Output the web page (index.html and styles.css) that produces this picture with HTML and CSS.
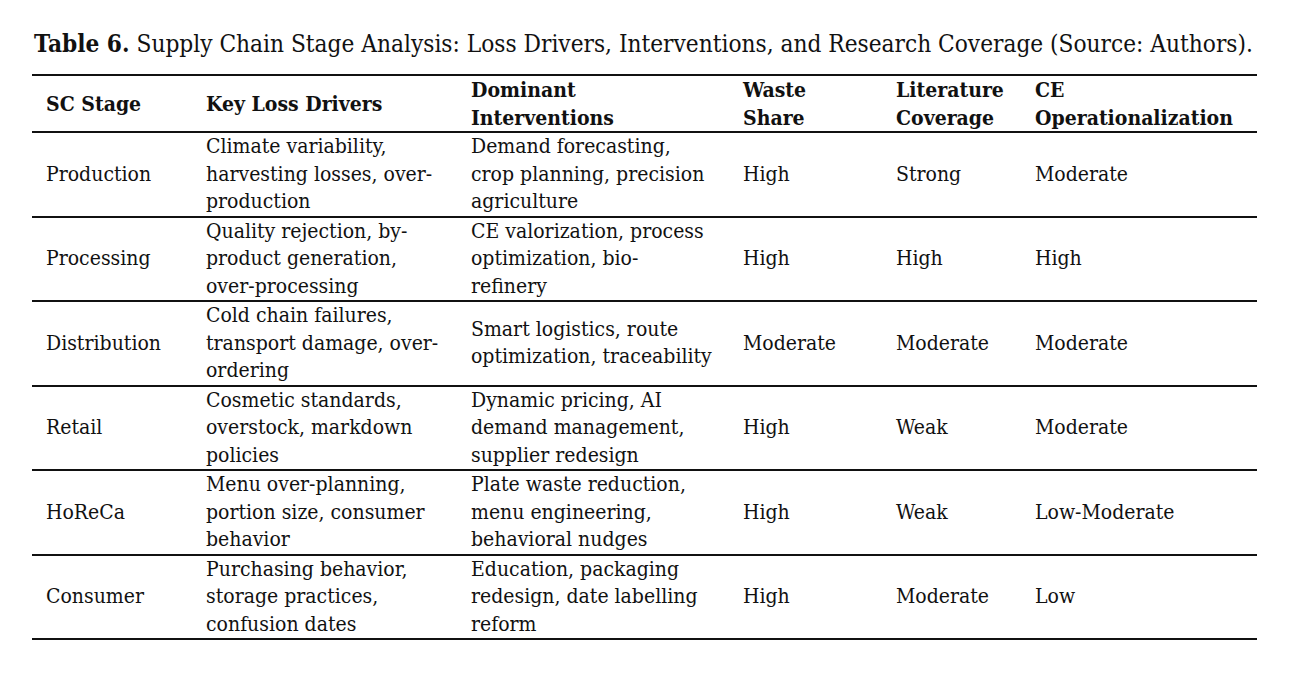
FILE: index.html
```html
<!DOCTYPE html>
<html>
<head>
<meta charset="utf-8">
<link rel="stylesheet" href="styles.css">
</head>
<body>
<div class="page">
  <p class="caption"><b>Table 6.</b> Supply Chain Stage Analysis: Loss Drivers, Interventions, and Research Coverage (Source: Authors).</p>
  <table class="tbl">
    <colgroup>
      <col class="c1"><col class="c2"><col class="c3"><col class="c4"><col class="c5"><col class="c6">
    </colgroup>
    <thead>
      <tr>
        <th>SC Stage</th>
        <th>Key Loss Drivers</th>
        <th>Dominant<br>Interventions</th>
        <th>Waste<br>Share</th>
        <th>Literature<br>Coverage</th>
        <th>CE<br>Operationalization</th>
      </tr>
    </thead>
    <tbody>
      <tr>
        <td>Production</td>
        <td>Climate variability,<br>harvesting losses, over-<br>production</td>
        <td>Demand forecasting,<br>crop planning, precision<br>agriculture</td>
        <td>High</td>
        <td>Strong</td>
        <td>Moderate</td>
      </tr>
      <tr>
        <td>Processing</td>
        <td>Quality rejection, by-<br>product generation,<br>over-processing</td>
        <td>CE valorization, process<br>optimization, bio-<br>refinery</td>
        <td>High</td>
        <td>High</td>
        <td>High</td>
      </tr>
      <tr>
        <td>Distribution</td>
        <td>Cold chain failures,<br>transport damage, over-<br>ordering</td>
        <td>Smart logistics, route<br>optimization, traceability</td>
        <td>Moderate</td>
        <td>Moderate</td>
        <td>Moderate</td>
      </tr>
      <tr>
        <td>Retail</td>
        <td>Cosmetic standards,<br>overstock, markdown<br>policies</td>
        <td>Dynamic pricing, AI<br>demand management,<br>supplier redesign</td>
        <td>High</td>
        <td>Weak</td>
        <td>Moderate</td>
      </tr>
      <tr>
        <td>HoReCa</td>
        <td>Menu over-planning,<br>portion size, consumer<br>behavior</td>
        <td>Plate waste reduction,<br>menu engineering,<br>behavioral nudges</td>
        <td>High</td>
        <td>Weak</td>
        <td>Low-Moderate</td>
      </tr>
      <tr>
        <td>Consumer</td>
        <td>Purchasing behavior,<br>storage practices,<br>confusion dates</td>
        <td>Education, packaging<br>redesign, date labelling<br>reform</td>
        <td>High</td>
        <td>Moderate</td>
        <td>Low</td>
      </tr>
    </tbody>
  </table>
</div>
</body>
</html>
```
FILE: styles.css
```css
html, body {
  margin: 0;
  padding: 0;
  background: #ffffff;
}
body {
  font-family: "DejaVu Serif Condensed", "DejaVu Serif", "Liberation Serif", serif;
  color: #111111;
}
.page {
  padding: 30px 37px 0 32px;
}
.caption {
  margin: 0 0 16px 2px;
  font-size: 24.2px;
  line-height: 28px;
  white-space: nowrap;
}
.caption b {
  font-weight: bold;
}
.tbl {
  width: 1225px;
  border-collapse: collapse;
  table-layout: fixed;
  font-size: 21px;
  line-height: 27.5px;
}
.c1 { width: 160px; }
.c2 { width: 265px; }
.c3 { width: 272px; }
.c4 { width: 153px; }
.c5 { width: 139px; }
.c6 { width: 236px; }
.tbl th, .tbl td {
  padding: 0 0 0 14px;
  text-align: left;
  vertical-align: middle;
  white-space: nowrap;
}
.tbl th {
  font-weight: bold;
  height: 54px;
}
.tbl thead tr {
  border-top: 2px solid #111111;
  border-bottom: 2px solid #111111;
}
.tbl tbody tr {
  border-bottom: 2px solid #111111;
}
.tbl td {
  height: 82.3px;
}
```
